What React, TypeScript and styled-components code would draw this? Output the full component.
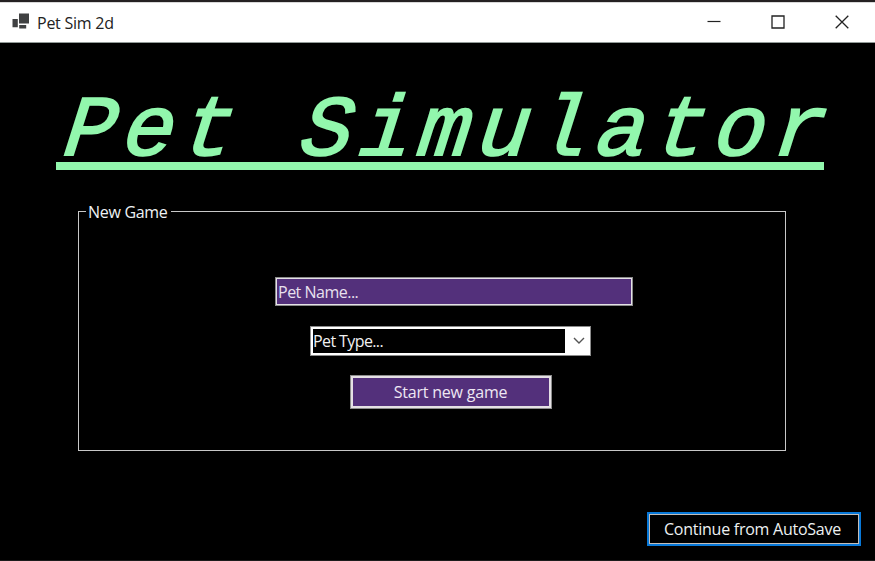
import React from "react";
import styled, { createGlobalStyle } from "styled-components";

const GlobalStyle = createGlobalStyle`
  * { box-sizing: border-box; }
  html, body { margin: 0; background: #000; overflow: hidden; }
  body, button, input { font-family: "Open Sans", "Noto Sans", sans-serif; font-size: 16px; }
`;

const Window = styled.div`
  width: 875px;
  height: 561px;
  display: flex;
  flex-direction: column;
  background: #000;
  border-top: 2px solid #242122;
  border-bottom: 1px solid #1c1c1c;
`;

const TitleBar = styled.header`
  height: 41px;
  flex: none;
  display: flex;
  align-items: center;
  background: #fff;
  border-top: 1px solid #d8d8d8;
  border-bottom: 1px solid #929b98;
  padding: 0 1px 2px 12px;
`;

const Label = styled.span<{ $spacing?: number }>`
  display: block;
  white-space: pre;
  line-height: 22px;
  letter-spacing: ${(p) => p.$spacing ?? -0.2}px;
`;

const AppName = styled(Label)`
  flex: 1;
  margin-left: 7px;
  padding-top: 2px;
  color: #222;
`;

const Controls = styled.div`
  display: flex;
`;

const ControlButton = styled.button`
  width: 64px;
  height: 38px;
  padding: 0;
  border: 0;
  background: transparent;
  display: grid;
  place-items: center;
`;

const Content = styled.main`
  flex: 1;
  display: flex;
  flex-direction: column;
`;

const Title = styled.h1`
  width: 768px;
  height: 77px;
  margin: 50px 0 0 56px;
  padding: 5px 0 0 5px;
  border-bottom: 8px solid #92f7ad;
  color: #92f7ad;
  font: italic 400 86px/69px "Liberation Mono", monospace;
  white-space: pre;
`;

const TitleText = styled.span`
  display: block;
  letter-spacing: 7.5px;
  -webkit-text-stroke: 2px #92f7ad;
  transform: skewX(-7deg);
  transform-origin: 0 100%;
`;

const Group = styled.fieldset`
  width: 708px;
  height: 251px;
  min-width: 0;
  margin: 30px 0 0 78px;
  padding: 55px 0 0;
  border: 1px solid #c8c8c8;
  display: flex;
  flex-direction: column;
`;

const Legend = styled.legend`
  height: 22px;
  margin-left: 7px;
  padding: 1px 3px 0 2px;
  color: #eef2f5;
`;

const NameField = styled.div`
  width: 358px;
  height: 29px;
  margin-left: 196px;
  padding: 3px 0 0 2px;
  background: #53307b;
  color: #e8e0ee;
  border: 1px solid #8b8b8b;
  box-shadow: inset 0 0 0 1px #e4e2e6;
`;

const TypeSelect = styled.div`
  width: 281px;
  height: 30px;
  margin: 20px 0 0 231px;
  display: flex;
  border: 1px solid #8b8b8b;
  background: #fff;
  padding: 2px 0 2px 2px;
`;

const SelectValue = styled.div`
  width: 252px;
  padding-top: 1px;
  background: #000;
  color: #f1f1f1;
`;

const Arrow = styled.div`
  flex: 1;
  display: grid;
  place-items: center;
  padding-left: 3px;
`;

const StartButton = styled.button`
  width: 202px;
  height: 34px;
  margin: 19px 0 0 271px;
  padding: 0 1px 0 0;
  display: grid;
  place-items: center;
  color: #eee7f3;
  background: #53307b;
  border: 1px solid #8c8c8c;
  box-shadow: inset 0 0 0 2px #e5e1e5;
`;

const ContinueButton = styled.button`
  width: 214px;
  height: 34px;
  margin: 61px 14px 0 auto;
  padding: 0 3px 0 0;
  display: grid;
  place-items: center;
  color: #edf1f2;
  background: #000;
  border: 2px solid #0878d8;
  box-shadow: inset 0 0 0 1px #c3bdb9;
`;

function FormIcon() {
  return (
    <svg width="18" height="17" viewBox="0 0 18 17" fill="#404142">
      <path d="M7 .5h10v10H7zM.5 6h5.3v8.3H.5zM7.2 12h7v3.5h-7z" />
    </svg>
  );
}

export default function App() {
  return (
    <>
      <GlobalStyle />
      <Window>
        <TitleBar>
          <FormIcon />
          <AppName $spacing={-0.25}>Pet Sim 2d</AppName>
          <Controls>
            <ControlButton aria-label="Minimize">
              <svg width="14" height="14" stroke="#222" strokeWidth="1.2"><path d="M.5 6.5h13" /></svg>
            </ControlButton>
            <ControlButton aria-label="Maximize">
              <svg width="14" height="14" fill="none" stroke="#222" strokeWidth="1.3"><path d="M1 1h12v12H1z" /></svg>
            </ControlButton>
            <ControlButton aria-label="Close">
              <svg width="14" height="14" stroke="#222" strokeWidth="1.3"><path d="m.7.7 12.6 12.6M13.3.7.7 13.3" /></svg>
            </ControlButton>
          </Controls>
        </TitleBar>
        <Content>
          <Title><TitleText>Pet Simulator</TitleText></Title>
          <Group>
            <Legend><Label $spacing={-0.3}>New Game</Label></Legend>
            <NameField><Label $spacing={-0.5}>Pet Name...</Label></NameField>
            <TypeSelect>
              <SelectValue><Label $spacing={-0.6}>Pet Type...</Label></SelectValue>
              <Arrow>
                <svg width="12" height="8" fill="none" stroke="#555" strokeWidth="1.4"><path d="m1 1 5 5 5-5" /></svg>
              </Arrow>
            </TypeSelect>
            <StartButton><Label>Start new game</Label></StartButton>
          </Group>
          <ContinueButton><Label $spacing={-0.25}>Continue from AutoSave</Label></ContinueButton>
        </Content>
      </Window>
    </>
  );
}
